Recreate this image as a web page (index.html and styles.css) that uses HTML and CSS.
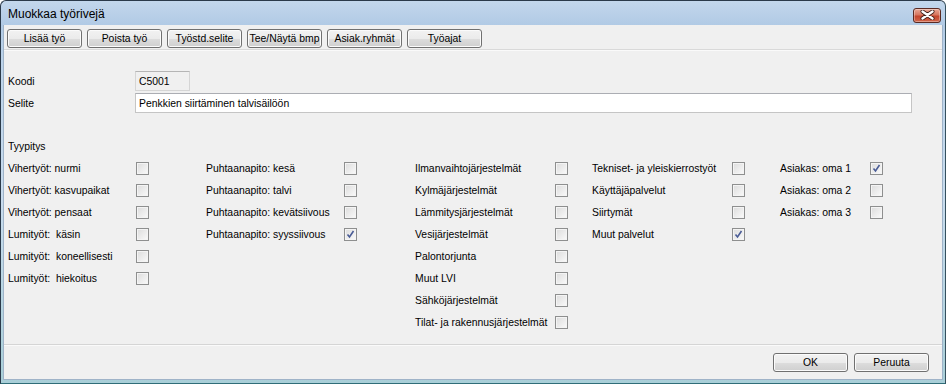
FILE: index.html
```html
<!DOCTYPE html>
<html lang="fi">
<head>
<meta charset="utf-8">
<title>Muokkaa työrivejä</title>
<link rel="stylesheet" href="styles.css">
</head>
<body>
<div class="window">
  <div class="titlebar">
    <span class="title">Muokkaa työrivejä</span>
    <span class="close">
      <svg width="15" height="10" viewBox="0 0 15 10">
        <path d="M2.5 1.5 L12.5 8.5 M12.5 1.5 L2.5 8.5" stroke="#3b1a14" stroke-width="4" stroke-linecap="round"/>
        <path d="M2.5 1.5 L12.5 8.5 M12.5 1.5 L2.5 8.5" stroke="#ffffff" stroke-width="2.4" stroke-linecap="round"/>
      </svg>
    </span>
  </div>
  <div class="client">
    <div class="toolbar">
      <button class="btn">Lisää työ</button>
      <button class="btn">Poista työ</button>
      <button class="btn">Työstd.selite</button>
      <button class="btn">Tee/Näytä bmp</button>
      <button class="btn">Asiak.ryhmät</button>
      <button class="btn">Työajat</button>
    </div>
    <div class="form">
      <div class="field">
        <span class="flabel">Koodi</span>
        <span class="input readonly">C5001</span>
      </div>
      <div class="field">
        <span class="flabel">Selite</span>
        <span class="input wide">Penkkien siirtäminen talvisäilöön</span>
      </div>
      <div class="section">Tyypitys</div>
      <div class="checks">
        <div class="col c1">
          <div class="row"><span class="lbl">Vihertyöt: nurmi</span><span class="cb"></span></div>
          <div class="row"><span class="lbl">Vihertyöt: kasvupaikat</span><span class="cb"></span></div>
          <div class="row"><span class="lbl">Vihertyöt: pensaat</span><span class="cb"></span></div>
          <div class="row"><span class="lbl">Lumityöt:&nbsp; käsin</span><span class="cb"></span></div>
          <div class="row"><span class="lbl">Lumityöt:&nbsp; koneellisesti</span><span class="cb"></span></div>
          <div class="row"><span class="lbl">Lumityöt:&nbsp; hiekoitus</span><span class="cb"></span></div>
        </div>
        <div class="col c2">
          <div class="row"><span class="lbl">Puhtaanapito: kesä</span><span class="cb"></span></div>
          <div class="row"><span class="lbl">Puhtaanapito: talvi</span><span class="cb"></span></div>
          <div class="row"><span class="lbl">Puhtaanapito: kevätsiivous</span><span class="cb"></span></div>
          <div class="row"><span class="lbl">Puhtaanapito: syyssiivous</span><span class="cb checked"><svg width="9" height="9" viewBox="0 0 9 9"><path d="M1.5 4.5 L3.5 7 L7.5 1" fill="none" stroke="#4a5c96" stroke-width="1.6"/></svg></span></div>
        </div>
        <div class="col c3">
          <div class="row"><span class="lbl">Ilmanvaihtojärjestelmät</span><span class="cb"></span></div>
          <div class="row"><span class="lbl">Kylmäjärjestelmät</span><span class="cb"></span></div>
          <div class="row"><span class="lbl">Lämmitysjärjestelmät</span><span class="cb"></span></div>
          <div class="row"><span class="lbl">Vesijärjestelmät</span><span class="cb"></span></div>
          <div class="row"><span class="lbl">Palontorjunta</span><span class="cb"></span></div>
          <div class="row"><span class="lbl">Muut LVI</span><span class="cb"></span></div>
          <div class="row"><span class="lbl">Sähköjärjestelmät</span><span class="cb"></span></div>
          <div class="row"><span class="lbl">Tilat- ja rakennusjärjestelmät</span><span class="cb"></span></div>
        </div>
        <div class="col c4">
          <div class="row"><span class="lbl">Tekniset- ja yleiskierrostyöt</span><span class="cb"></span></div>
          <div class="row"><span class="lbl">Käyttäjäpalvelut</span><span class="cb"></span></div>
          <div class="row"><span class="lbl">Siirtymät</span><span class="cb"></span></div>
          <div class="row"><span class="lbl">Muut palvelut</span><span class="cb checked"><svg width="9" height="9" viewBox="0 0 9 9"><path d="M1.5 4.5 L3.5 7 L7.5 1" fill="none" stroke="#4a5c96" stroke-width="1.6"/></svg></span></div>
        </div>
        <div class="col c5">
          <div class="row"><span class="lbl">Asiakas: oma 1</span><span class="cb checked"><svg width="9" height="9" viewBox="0 0 9 9"><path d="M1.5 4.5 L3.5 7 L7.5 1" fill="none" stroke="#4a5c96" stroke-width="1.6"/></svg></span></div>
          <div class="row"><span class="lbl">Asiakas: oma 2</span><span class="cb"></span></div>
          <div class="row"><span class="lbl">Asiakas: oma 3</span><span class="cb"></span></div>
        </div>
      </div>
    </div>
    <div class="footer">
      <button class="btn">OK</button>
      <button class="btn">Peruuta</button>
    </div>
  </div>
</div>
</body>
</html>
```
FILE: styles.css
```css
html, body {
  margin: 0;
  padding: 0;
  background: #ffffff;
}

body {
  font-family: "Liberation Sans", Arial, sans-serif;
  font-size: 10.4px;
  color: #000000;
}

.window {
  width: 946px;
  height: 384px;
  box-sizing: border-box;
  display: flex;
  flex-direction: column;
  border: 1px solid #2b3a4a;
  border-right-color: #35505e;
  border-bottom-color: #2f6d78;
  border-radius: 6px 6px 0 0;
  background: linear-gradient(to bottom, #c3d7ec 0px, #b1cae5 24px, #bcd3ea 60px, #c8dcee 200px, #a9cfd8 100%);
  overflow: hidden;
}

.titlebar {
  height: 24px;
  display: flex;
  align-items: center;
  justify-content: space-between;
  padding: 0 3px 0 7px;
  box-sizing: border-box;
}

.title {
  font-size: 12px;
  color: #000000;
  padding-top: 1px;
}

.close {
  width: 28px;
  height: 15px;
  box-sizing: border-box;
  margin-top: 4px;
  margin-right: 1px;
  border: 1px solid #5a2a22;
  border-radius: 3px;
  background: linear-gradient(to bottom, #e9a795 0%, #d7765f 45%, #c4452d 55%, #d0664a 100%);
  display: flex;
  align-items: center;
  justify-content: center;
  box-shadow: inset 0 0 0 1px rgba(255, 255, 255, 0.35);
}

.client {
  flex: 1;
  margin: 0 2px 3px 2px;
  background: #f0f0f0;
  display: flex;
  flex-direction: column;
  border-left: 1px solid #9fb3c8;
  border-right: 1px solid #9fb3c8;
  border-bottom: 1px solid #9fb3c8;
}

.toolbar {
  height: 25px;
  box-sizing: border-box;
  padding: 4px 0 0 3px;
  display: flex;
  gap: 5px;
  border-bottom: 1px solid #d9d9d9;
  box-shadow: 0 1px 0 #fafafa;
}

.btn {
  width: 75px;
  height: 19px;
  box-sizing: border-box;
  padding: 0;
  white-space: nowrap;
  font-family: "Liberation Sans", Arial, sans-serif;
  font-size: 10.4px;
  color: #000000;
  border: 1px solid #707070;
  border-radius: 3px;
  background: linear-gradient(to bottom, #f2f2f2 0%, #ebebeb 50%, #dddddd 51%, #cfcfcf 100%);
  box-shadow: inset 0 0 0 1px #fbfbfb;
}

.form {
  flex: 1;
  padding: 21px 0 0 4px;
  display: flex;
  flex-direction: column;
}

.field {
  display: flex;
  align-items: center;
  height: 20px;
  margin-bottom: 2px;
}

.flabel {
  width: 127px;
  flex: none;
}

.input {
  height: 20px;
  box-sizing: border-box;
  border: 1px solid #c5c5c5;
  border-top-color: #abadb3;
  background: #ffffff;
  padding: 0 0 0 3px;
  display: flex;
  align-items: center;
}

.input.readonly {
  width: 55px;
  background: #f0f0f0;
  border-color: #d5d5d5;
  border-top-color: #b5b5b5;
}

.input.wide {
  width: 777px;
}

.section {
  margin-top: 25px;
  height: 13px;
  line-height: 13px;
}

.checks {
  display: flex;
  margin-top: 4px;
}

.col {
  display: flex;
  flex-direction: column;
}

.row {
  height: 22px;
  display: flex;
  align-items: center;
}

.lbl {
  flex: none;
  white-space: nowrap;
}

.c1 { width: 198px; }
.c1 .lbl { width: 128px; }
.c2 { width: 209px; }
.c2 .lbl { width: 138px; }
.c3 { width: 177px; }
.c3 .lbl { width: 140px; }
.c4 { width: 188px; }
.c4 .lbl { width: 140px; }
.c5 .lbl { width: 90px; }

.cb {
  width: 13px;
  height: 13px;
  box-sizing: border-box;
  border: 1px solid #8e8f8f;
  background: linear-gradient(135deg, #dcdcdc 0%, #eeeeee 60%, #fbfbfb 100%);
  box-shadow: inset 0 0 0 1px #f4f4f4;
  display: flex;
  align-items: center;
  justify-content: center;
  flex: none;
}

.footer {
  height: 35px;
  box-sizing: border-box;
  border-top: 1px solid #d5d5d5;
  box-shadow: inset 0 1px 0 #fafafa;
  display: flex;
  justify-content: flex-end;
  gap: 6px;
  padding: 8px 13px 0 0;
}
```
